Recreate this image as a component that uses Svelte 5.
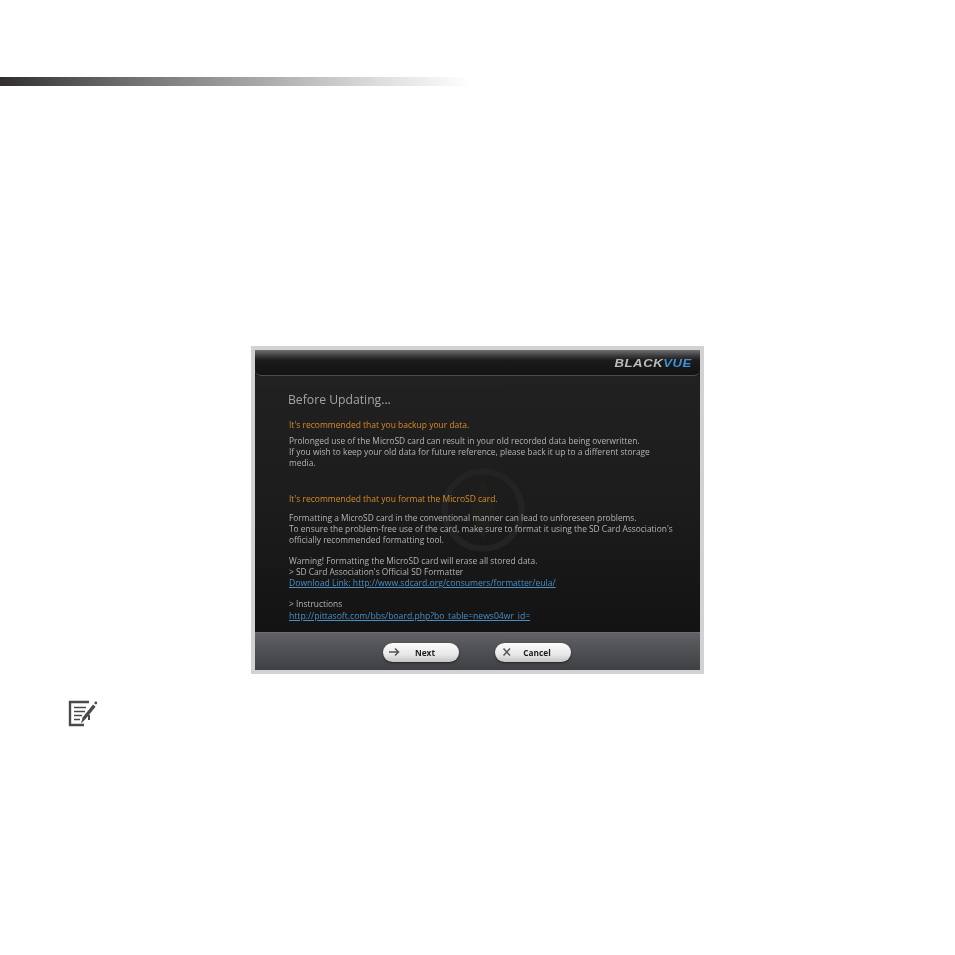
<script>
  const notes = [
    { text: "Prolonged use of the MicroSD card can result in your old recorded data being overwritten." },
    { text: "If you wish to keep your old data for future reference, please back it up to a different storage" },
    { text: "media." }
  ];
  const formatNotes = [
    "Formatting a MicroSD card in the conventional manner can lead to unforeseen problems.",
    "To ensure the problem-free use of the card, make sure to format it using the SD Card Association's",
    "officially recommended formatting tool."
  ];
</script>

<main class="page">
  <div class="rule"></div>

  <figure class="shot">
    <div class="window">
      <header class="head">
        <span class="logo">BLACK<b>VUE</b></span>
      </header>

      <section class="body">
        <svg class="mark" viewBox="0 0 100 100" aria-hidden="true">
          <circle cx="50" cy="50" r="42" fill="none" stroke="#232323" stroke-width="7" />
          <path d="M50 18 L64 50 L50 82 L36 50 Z" fill="#21201c" />
        </svg>

        <h1>Before Updating...</h1>
        <p class="warn first">It's recommended that you backup your data.</p>
        <div class="para one">
          {#each notes as n}<p>{n.text}</p>{/each}
        </div>

        <p class="warn second">It's recommended that you format the MicroSD card.</p>
        <div class="para two">
          {#each formatNotes as t}<p>{t}</p>{/each}
        </div>

        <div class="para three">
          <p>Warning! Formatting the MicroSD card will erase all stored data.</p>
          <p>&gt; SD Card Association's Official SD Formatter</p>
        </div>
        <a class="link dl" href="#dl">Download Link: http://www.sdcard.org/consumers/formatter/eula/</a>
        <p class="instr">&gt; Instructions</p>
        <a class="link" href="#in">http://pittasoft.com/bbs/board.php?bo_table=news04wr_id=</a>
      </section>

      <footer class="foot">
        <button class="pill">
          <svg width="12" height="10" viewBox="0 0 12 10" aria-hidden="true">
            <path d="M0 5h9.5M6 1.5L9.5 5 6 8.5" fill="none" stroke="#555" stroke-width="1.5" />
          </svg>
          <span>Next</span>
        </button>
        <button class="pill">
          <svg width="12" height="10" viewBox="0 0 12 10" aria-hidden="true">
            <path d="M2.5 1.5l6.5 7M9 1.5l-6.5 7" fill="none" stroke="#555" stroke-width="1.5" />
          </svg>
          <span>Cancel</span>
        </button>
      </footer>
    </div>
  </figure>

  <svg class="note" width="30" height="27" viewBox="0 0 30 27" aria-hidden="true">
    <path d="M21 2H2v23h14" fill="none" stroke="#4a4a4a" stroke-width="2.4" />
    <path d="M21 15v5" stroke="#4a4a4a" stroke-width="2" />
    <path d="M6 7.5h12M6 11.5h11M6 15.5h8M6 19.5h6" stroke="#4a4a4a" stroke-width="1.7" />
    <path d="M25 4.5l2.6 2.2-10 12.3-4.6 4.5 1.6-6.1z" fill="#4a4a4a" />
    <circle cx="27.8" cy="3" r="1.4" fill="#4a4a4a" />
  </svg>
</main>

<style>
  :global(body) {
    background: #fff;
    font-family: "Open Sans", "Liberation Sans", sans-serif;
  }
  .page {
    height: 955px;
    padding-top: 77px;
    box-sizing: border-box;
    overflow: hidden;
  }
  .rule {
    width: 470px;
    height: 9px;
    background: linear-gradient(90deg, #322e2f 0%, #6a6a6a 25%, #a8a8a8 55%, #dcdcdc 80%, #fff 100%);
  }
  .shot {
    margin: 260px 0 0 251px;
    width: 453px;
    height: 328px;
    box-sizing: border-box;
    padding: 4px;
    background: #d2d2d2;
  }
  .window {
    height: 100%;
    display: flex;
    flex-direction: column;
    background: #1c1c1c;
  }
  .head {
    height: 26px;
    flex: none;
    box-sizing: border-box;
    display: flex;
    align-items: center;
    justify-content: flex-end;
    padding-right: 8px;
    background: linear-gradient(180deg, #6f7174 0%, #3e3e3f 22%, #1b1b1c 42%, #131313 100%);
    border-bottom: 1px solid #4c4c4c;
    border-radius: 0 0 6px 6px;
  }
  .logo {
    font: italic 700 11.5px "Liberation Sans", sans-serif;
    letter-spacing: 0.5px;
    color: #bdbdbd;
    transform: scaleX(1.14);
    transform-origin: right center;
    filter: blur(0.35px);
  }
  .logo b {
    font-weight: 700;
    color: #3f8fd2;
  }
  .body {
    position: relative;
    flex: 1;
    padding: 16px 0 0 33px;
    background: linear-gradient(180deg, #212121 0%, #1c1c1c 50%, #131313 100%);
    filter: blur(0.35px);
    overflow: hidden;
  }
  .mark {
    position: absolute;
    left: 182px;
    top: 88px;
    width: 92px;
    height: 92px;
  }
  h1 {
    position: relative;
    margin: 0;
    font-size: 12.2px;
    line-height: 16px;
    font-weight: 400;
    color: #a4a4a4;
  }
  p {
    position: relative;
    margin: 0;
  }
  .warn, .para p, .instr, .link {
    font-size: 8.4px;
    line-height: 11px;
    white-space: nowrap;
    padding-left: 1px;
  }
  .warn {
    font-size: 8.5px;
    color: #d98a26;
  }
  .first { margin-top: 11px; }
  .second { margin-top: 25px; }
  .para p, .instr {
    color: #b4b4b4;
  }
  .one { margin-top: 5px; }
  .two { margin-top: 8px; }
  .three { margin-top: 10px; }
  .link {
    position: relative;
    display: block;
    width: max-content;
    font-size: 8.6px;
    color: #4a8fc4;
    text-decoration: underline;
  }
  .dl { margin-top: 1px; }
  .instr { margin: 9px 0 2px; }
  .foot {
    height: 38px;
    flex: none;
    box-sizing: border-box;
    display: flex;
    justify-content: center;
    align-items: center;
    gap: 36px;
    padding: 1px 1px 0 0;
    background: linear-gradient(180deg, #626367 0%, #55565a 30%, #3f4045 100%);
    border-top: 1px solid #6d6d6d;
  }
  .pill {
    width: 76px;
    height: 19px;
    padding: 0 0 0 6px;
    display: flex;
    align-items: center;
    border: none;
    border-radius: 10px;
    background: linear-gradient(180deg, #fbfbfb 0%, #e8e8e8 60%, #c4c4c4 100%);
    box-shadow: 0 1px 2px #222;
    filter: blur(0.25px);
  }
  .pill span {
    flex: 1;
    padding-right: 10px;
    text-align: center;
    font: 700 8.3px "Open Sans", sans-serif;
    color: #1c1c1c;
  }
  .note {
    display: block;
    margin: 26px 0 0 68px;
  }
</style>
